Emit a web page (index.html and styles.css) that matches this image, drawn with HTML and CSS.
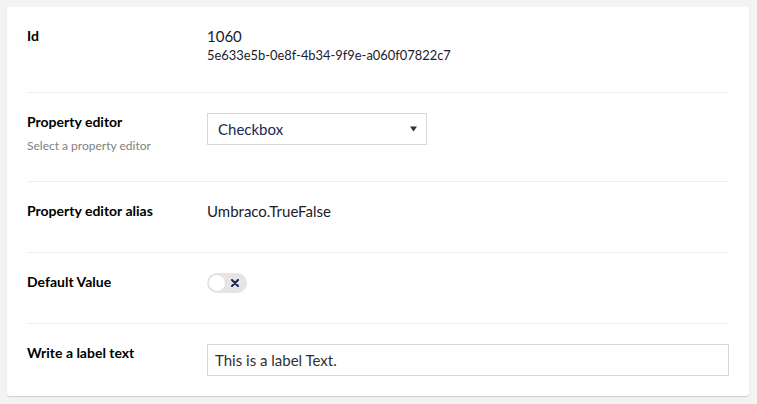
FILE: index.html
```html
<!DOCTYPE html>
<html lang="en">
<head>
<meta charset="utf-8">
<title>Data type</title>
<link rel="stylesheet" href="styles.css">
</head>
<body>
<div class="card">
  <div class="row row-first">
    <div class="label-col"><div class="label">Id</div></div>
    <div class="value-col">
      <div class="value">1060</div>
      <div class="guid">5e633e5b-0e8f-4b34-9f9e-a060f07822c7</div>
    </div>
  </div>
  <div class="row row-editor">
    <div class="label-col">
      <div class="label">Property editor</div>
      <div class="desc">Select a property editor</div>
    </div>
    <div class="value-col">
      <div class="select">
        <span class="select-text">Checkbox</span>
        <svg class="caret" width="7" height="6" viewBox="0 0 7 6"><path d="M0 0.5H7L3.5 5.5Z" fill="#333"/></svg>
      </div>
    </div>
  </div>
  <div class="row row-alias">
    <div class="label-col"><div class="label">Property editor alias</div></div>
    <div class="value-col"><div class="value">Umbraco.TrueFalse</div></div>
  </div>
  <div class="row">
    <div class="label-col"><div class="label">Default Value</div></div>
    <div class="value-col">
      <div class="toggle">
        <span class="knob"></span>
        <svg class="toggle-x" width="8" height="8" viewBox="0 0 8 8"><path d="M1 1L7 7M7 1L1 7" stroke="#1b264f" stroke-width="2" stroke-linecap="round"/></svg>
      </div>
    </div>
  </div>
  <div class="row row-last">
    <div class="label-col"><div class="label">Write a label text</div></div>
    <div class="value-col">
      <div class="text-input">This is a label Text.</div>
    </div>
  </div>
</div>
</body>
</html>
```

FILE: styles.css
```css
html, body {
  margin: 0;
  padding: 0;
}
body {
  background: #f4f2f2;
  padding: 7px;
  font-family: Lato, "Open Sans", sans-serif;
  color: #000;
}
.card {
  box-sizing: border-box;
  width: 742px;
  background: #fff;
  border-radius: 3px;
  box-shadow: 0 1px 1px rgba(0, 0, 0, 0.16);
  padding: 20px;
}
.row {
  display: grid;
  grid-template-columns: 180px 1fr;
  padding: 20px 0 30px;
  border-bottom: 1px solid #f0eeee;
}
.row-first {
  padding-top: 0;
  padding-bottom: 28px;
}
.row-editor {
  padding-bottom: 27px;
}
.row-alias {
  padding-bottom: 32px;
}
.row-last {
  padding-bottom: 0;
  border-bottom: none;
}
.label {
  font-size: 14px;
  font-weight: 700;
  line-height: 18px;
}
.desc {
  margin-top: 7px;
  font-size: 12px;
  line-height: 16px;
  color: #7f7f7f;
}
.value {
  font-size: 15px;
  line-height: 18px;
  color: #1b1b2b;
}
.guid {
  margin-top: 1px;
  font-size: 12.9px;
  line-height: 18px;
  color: #1b1b2b;
}
.select {
  box-sizing: border-box;
  width: 220px;
  height: 32px;
  border: 1px solid #d8d7d9;
  display: flex;
  align-items: center;
  justify-content: space-between;
  padding: 0 9px 0 10px;
}
.select-text {
  font-size: 15px;
  color: #1b264f;
}
.caret {
  display: block;
}
.toggle {
  position: relative;
  box-sizing: border-box;
  width: 40px;
  height: 20px;
  border-radius: 10px;
  background: #e6e4e4;
  display: flex;
  align-items: center;
}
.knob {
  position: absolute;
  left: 1px;
  top: 1px;
  box-sizing: border-box;
  width: 18px;
  height: 18px;
  border-radius: 50%;
  background: #fff;
  border: 1px solid #e0dede;
}
.toggle-x {
  margin-left: 24px;
  display: block;
}
.text-input {
  box-sizing: border-box;
  width: 522px;
  height: 32px;
  border: 1px solid #d8d7d9;
  padding: 0 7px;
  font-size: 15px;
  line-height: 30px;
  color: #303033;
}
```
